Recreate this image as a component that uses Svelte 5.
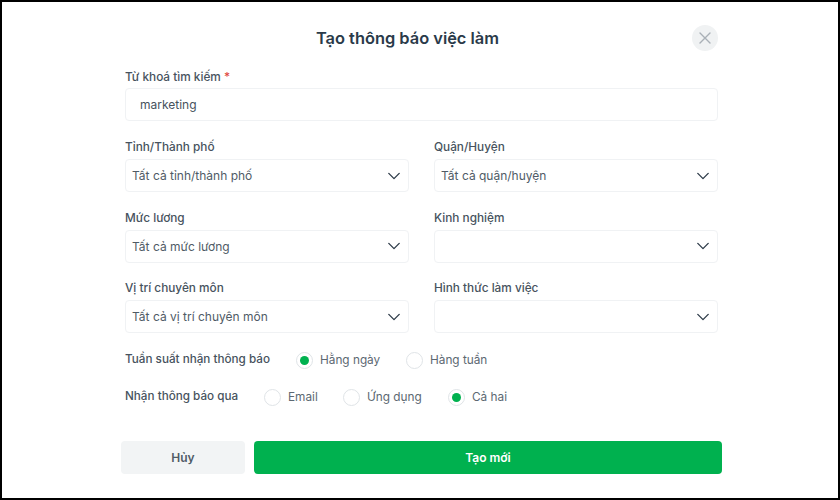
<script>
  const fields = [
    { label: 'Tỉnh/Thành phố', value: 'Tất cả tỉnh/thành phố' },
    { label: 'Quận/Huyện', value: 'Tất cả quận/huyện' },
    { label: 'Mức lương', value: 'Tất cả mức lương' },
    { label: 'Kinh nghiệm', value: '' },
    { label: 'Vị trí chuyên môn', value: 'Tất cả vị trí chuyên môn' },
    { label: 'Hình thức làm việc', value: '' }
  ];
  const groups = [
    { label: 'Tuần suất nhận thông báo', cls: 'freq', options: [['Hằng ngày', true], ['Hàng tuần', false]] },
    { label: 'Nhận thông báo qua', cls: 'via', options: [['Email', false], ['Ứng dụng', false], ['Cả hai', true]] }
  ];
</script>

<main class="frame">
  <header class="head">
    <h1>Tạo thông báo việc làm</h1>
    <button class="close" aria-label="Đóng">
      <svg width="12" height="12" viewBox="0 0 12 12"><path d="M1 1l10 10M11 1L1 11" stroke="#a9b0b7" stroke-width="1.4" stroke-linecap="round" fill="none"/></svg>
    </button>
  </header>

  <div class="form">
    <div class="label first">Từ khoá tìm kiếm <span class="req">*</span></div>
    <div class="box keyword">marketing</div>

    <div class="grid">
      {#each fields as f}
        <div class="field">
          <div class="label">{f.label}</div>
          <div class="box select">
            <span>{f.value}</span>
            <svg width="12" height="8" viewBox="0 0 12 8"><path d="M.8 1.4L6 6.6l5.2-5.2" stroke="#2c3a47" stroke-width="1.3" stroke-linecap="round" stroke-linejoin="round" fill="none"/></svg>
          </div>
        </div>
      {/each}
    </div>

    {#each groups as g}
      <div class="radios {g.cls}">
        <div class="rlabel">{g.label}</div>
        {#each g.options as [name, on]}
          <div class="opt">
            <span class="dot" class:on></span>
            <span>{name}</span>
          </div>
        {/each}
      </div>
    {/each}
  </div>

  <div class="actions">
    <button class="btn cancel">Hủy</button>
    <button class="btn create">Tạo mới</button>
  </div>
</main>

<style>
  :global(body) { margin: 0; background: #fff; }
  .frame {
    box-sizing: border-box;
    width: 840px;
    height: 500px;
    border: 2px solid #000;
    background: #fff;
    font-family: Inter, "Noto Sans", sans-serif;
    color: #4a5661;
    padding: 21px 116px 0 119px;
    display: flex;
    flex-direction: column;
  }
  .head {
    position: relative;
    height: 30px;
    display: flex;
    align-items: center;
    justify-content: center;
    padding-right: 28px;
  }
  h1 {
    margin: 0;
    font-size: 16.4px;
    font-weight: 600;
    color: #2a3a49;
  }
  .close {
    position: absolute;
    right: 4px;
    top: 2px;
    width: 26px;
    height: 26px;
    border: 0;
    border-radius: 50%;
    background: #f0f2f3;
    padding: 0;
    display: flex;
    align-items: center;
    justify-content: center;
  }
  .form { padding: 0 4px; }
  .label {
    font-size: 11.8px;
    font-weight: 500;
    line-height: 17px;
    color: #47535e;
    padding-top: 1px;
    margin-bottom: 3px;
  }
  .label.first { margin-top: 15px; margin-bottom: 2px; }
  .req { color: #e0483e; }
  .box {
    box-sizing: border-box;
    height: 33px;
    border: 1px solid #f0f2f4;
    border-radius: 4px;
    font-size: 12px;
    display: flex;
    align-items: center;
    color: #4f5b66;
  }
  .keyword { padding-left: 14px; color: #46525d; }
  .grid {
    display: grid;
    grid-template-columns: 284px 284px;
    column-gap: 25px;
    row-gap: 16.5px;
    margin-top: 17px;
  }
  .select { justify-content: space-between; padding: 0 8px 0 6px; }
  .radios {
    display: flex;
    align-items: center;
    font-size: 11.8px;
    height: 20px;
    color: #5c6872;
  }
  .freq { margin-top: 17px; }
  .via { margin-top: 17px; }
  .rlabel { font-weight: 500; font-size: 11.7px; color: #47535e; position: relative; top: -1px; }
  .freq .rlabel { width: 171px; }
  .via .rlabel { width: 139px; }
  .opt { display: flex; align-items: center; gap: 7px; }
  .freq .opt { width: 110px; }
  .via .opt:nth-of-type(2) { width: 79px; }
  .via .opt:nth-of-type(3) { width: 105px; }
  .dot {
    box-sizing: border-box;
    width: 17px;
    height: 17px;
    border-radius: 50%;
    border: 1px solid #e0e4e7;
    background: #fff;
    position: relative;
  }
  .dot.on::after {
    content: '';
    position: absolute;
    inset: 3px;
    border-radius: 50%;
    background: #00b14f;
  }
  .actions {
    display: flex;
    gap: 9px;
    margin-top: 34px;
  }
  .btn {
    height: 33px;
    border: 0;
    border-radius: 4px;
    font-family: inherit;
    font-size: 12px;
    font-weight: 600;
    padding: 0;
  }
  .cancel { width: 124px; background: #f2f4f5; color: #4f5b66; }
  .create { width: 468px; background: #00b14f; color: #fff; }
</style>
